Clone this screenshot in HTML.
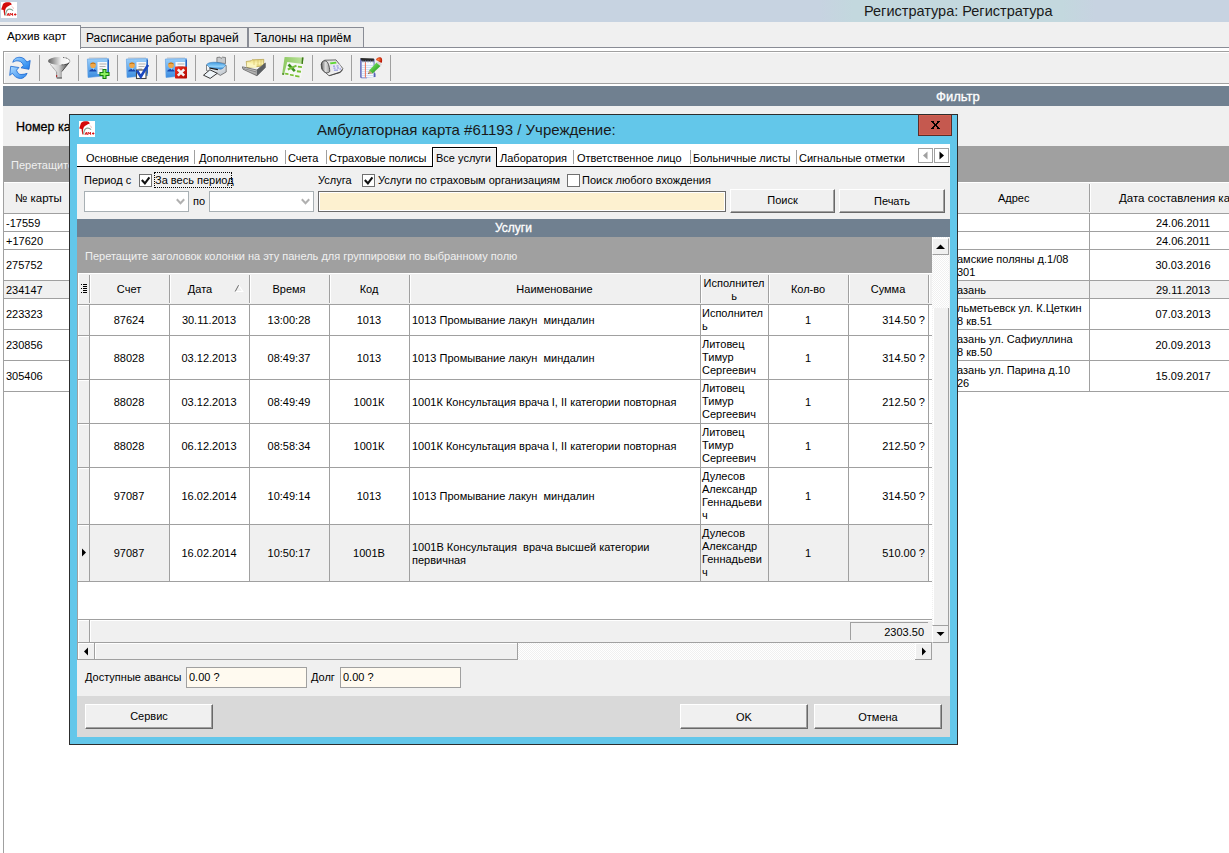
<!DOCTYPE html>
<html><head><meta charset="utf-8"><style>
*{box-sizing:border-box;margin:0;padding:0}
html,body{width:1229px;height:853px;overflow:hidden;background:#fff;font-family:"Liberation Sans",sans-serif;font-size:11px;color:#000}
div{position:absolute}
svg{display:block}
.t{white-space:pre;line-height:13px}
.cc{text-align:center}
.rr{text-align:right}
.bar{background:#708090;color:#fff;font-weight:bold;font-size:12px;text-align:center;line-height:19px}
.mtab{height:21px;border:1px solid #898c95;border-bottom:none;background:#ebebeb;font-size:12px;line-height:20px;padding-left:5px;white-space:pre}
.sep{top:55px;width:1px;height:26px;background:#a0a0a0}
.btn{background:#f0f0f0;border-top:1px solid #fff;border-left:1px solid #fff;border-right:1px solid #696969;border-bottom:1px solid #696969;box-shadow:inset -1px -1px 0 #a0a0a0;text-align:center;white-space:pre}
.vl{width:1px;background:#a0a0a0}
.hl{height:1px;background:#a0a0a0}
.cell{white-space:pre;line-height:13px;overflow:hidden}
</style></head><body>
<div style="left:0px;top:0px;width:1229px;height:22px;background:#c7d3e1"></div>
<div style="left:820px;top:0px;width:275px;height:22px;background:linear-gradient(90deg,rgba(196,216,222,0) 0%,#c3d8de 12%,#c3d8de 88%,rgba(196,216,222,0) 100%)"></div>
<div style="left:1px;top:2px;width:16px;height:16px;"><svg width="16" height="16" viewBox="0 0 16 16"><rect width="16" height="16" fill="#fff"/><path d="M0.2 7.5 L2 2 C3 0.5 6 0.2 8 0.3 C9.5 0.5 10.5 1.5 10.8 2.4 C8 3.5 6 4.5 5 6 C4 7.5 3.8 10 4 14 L3.2 12.7 C2.8 10.5 2.6 9 2.6 8.1 Z" fill="#d40a0a"/><path d="M4.6 13.5 C4.8 10 6 7.5 8 7.2 C10 7 11.5 8 12 8.8" stroke="#88a494" stroke-width="1.2" fill="none"/><path d="M10.5 4 C12 5 12.5 6.5 12.5 7" stroke="#f0b0b0" stroke-width="0.8" fill="none"/><path d="M6 13.8 L7.3 11.2 L8.4 13.8 M6.6 12.9 L8 12.9 M8.9 13.8 L9.2 11.2 L10.3 12.8 L11.4 11.2 L11.7 13.8 M13 12.5 L15.4 12.5 M14.2 11.3 L14.2 13.7" stroke="#d81818" stroke-width="1" fill="none"/></svg></div>
<div class="t" style="left:864px;top:2px;font-size:14.5px;line-height:18px;color:#1a1a1a">Регистратура: Регистратура</div>
<div style="left:0px;top:22px;width:1229px;height:26px;background:#f0f0f0"></div>
<div class="mtab" style="left:80px;top:27px;width:168px;">Расписание работы врачей</div>
<div class="mtab" style="left:248px;top:27px;width:116px;">Талоны на приём</div>
<div style="left:0px;top:47px;width:1229px;height:1px;background:#898c95"></div>
<div style="left:0px;top:25px;width:81px;height:24px;background:#fff;border-top:1px solid #898c95;border-right:1px solid #898c95"></div>
<div class="t" style="left:7px;top:28px;font-size:11.7px;line-height:16px">Архив карт</div>
<div style="left:3px;top:51px;width:1226px;height:33px;background:#f0f0f0;border:1px solid #a0a0a0;border-right:none;box-shadow:inset 1px 1px 0 #fff"></div>
<div style="left:39px;top:55px;width:1px;height:26px;background:#a0a0a0"></div>
<div style="left:78px;top:55px;width:1px;height:26px;background:#a0a0a0"></div>
<div style="left:117px;top:55px;width:1px;height:26px;background:#a0a0a0"></div>
<div style="left:156px;top:55px;width:1px;height:26px;background:#a0a0a0"></div>
<div style="left:195px;top:55px;width:1px;height:26px;background:#a0a0a0"></div>
<div style="left:234px;top:55px;width:1px;height:26px;background:#a0a0a0"></div>
<div style="left:273px;top:55px;width:1px;height:26px;background:#a0a0a0"></div>
<div style="left:312px;top:55px;width:1px;height:26px;background:#a0a0a0"></div>
<div style="left:351px;top:55px;width:1px;height:26px;background:#a0a0a0"></div>
<div style="left:390px;top:55px;width:1px;height:26px;background:#a0a0a0"></div>
<div style="left:8px;top:56px;width:24px;height:24px;"><svg width="24" height="24" viewBox="0 0 24 24"><defs><linearGradient id="rg" x1="0" y1="0" x2="1" y2="1"><stop offset="0" stop-color="#9dd2ff"/><stop offset="0.6" stop-color="#4aa0f6"/><stop offset="1" stop-color="#1e7ae8"/></linearGradient>
<linearGradient id="rg2" x1="1" y1="1" x2="0" y2="0"><stop offset="0" stop-color="#2a86ee"/><stop offset="1" stop-color="#b0dcff"/></linearGradient></defs>
<path d="M4.8 6.3 C6 2 9 1.3 11.8 1.3 C15 1.3 17.5 3.5 18.8 6 L22.2 4.5 L21 13.3 L13 11.8 L15.5 9.4 C14 6 12 4.8 9 4.8 C7.5 4.8 6 5.5 4.8 6.3 Z" fill="url(#rg)" stroke="#1866d0" stroke-width="0.8"/>
<path d="M19.1 17.3 C17.5 21 15 22.5 12.4 22.5 C9 22.5 6 20 4.5 17.3 L1.7 19.4 L2.7 10.3 L10.9 11.5 L8.5 14.2 C9.5 17 11 18.5 13 18.5 C15.5 18.5 17.5 18 19.1 17.3 Z" fill="url(#rg2)" stroke="#1866d0" stroke-width="0.8"/></svg></div>
<div style="left:47px;top:56px;width:24px;height:24px;"><svg width="24" height="24" viewBox="0 0 24 24"><defs><linearGradient id="fg1" x1="0" y1="0" x2="1" y2="0"><stop offset="0" stop-color="#5e5e5e"/><stop offset="0.6" stop-color="#f2f2f2"/><stop offset="1" stop-color="#ffffff"/></linearGradient>
<linearGradient id="fg2" x1="0" y1="0" x2="1" y2="0"><stop offset="0" stop-color="#f4f4f4"/><stop offset="0.45" stop-color="#d0d0d0"/><stop offset="1" stop-color="#4a4a4a"/></linearGradient></defs>
<path d="M3.5 8.5 L9.6 16 L9.6 22.3 L14.9 22.3 L14.9 15.5 L21.8 7 Z" fill="url(#fg2)"/>
<path d="M9.6 16 L9.6 22.3" stroke="#777" stroke-width="0.7"/>
<path d="M3.5 8.5 L9.6 16" stroke="#444" stroke-width="0.6" stroke-dasharray="1 0.6"/>
<path d="M21.8 7 L14.9 15.5" stroke="#333" stroke-width="0.8"/>
<ellipse cx="12" cy="5" rx="11" ry="3.9" fill="url(#fg1)"/>
<path d="M16 1.5 C21 1.8 23.5 4 22.6 6 C21.5 8 18 8.8 14 8.9" stroke="#333" stroke-width="0.7" fill="none" stroke-dasharray="1 0.5"/>
<rect x="10" y="21.5" width="4.9" height="1" fill="#444"/>
<rect x="9" y="19.2" width="1.2" height="1.6" fill="#b01818"/></svg></div>
<div style="left:86px;top:56px;width:24px;height:24px;"><svg width="24" height="24" viewBox="0 0 24 24"><defs><linearGradient id="cg" x1="0" y1="0" x2="0" y2="1"><stop offset="0" stop-color="#9cd0fa"/><stop offset="1" stop-color="#3a8ce0"/></linearGradient></defs>
<path d="M3 2 L21 2" stroke="#b8b8b8" stroke-width="0.8"/>
<path d="M1.4 3 L22.5 2.6 L22.5 19.5 L2 21.5 Z" fill="url(#cg)" stroke="#5a9ae0" stroke-width="0.6"/>
<path d="M21.5 3 L23 4 L23 17 L22 18Z" fill="#2a62c0"/>
<rect x="11.5" y="6" width="9.5" height="12" fill="#f8f8f8"/>
<path d="M13.5 8 H20.5 M13.5 10.5 H19.5 M13.5 13 H17" stroke="#a8a8a8" stroke-width="0.9"/>
<circle cx="7" cy="9.3" r="2.8" fill="#f0a848"/><path d="M4.2 8.8 C4.2 5.8 9.8 5.8 9.8 8.8 C9 7.5 5 7.5 4.2 8.8Z" fill="#c07010"/>
<path d="M3.2 15.5 C3.2 12 10.5 12 10.5 15.5 Z" fill="#1848b0"/><path d="M6.5 12.3 L7.5 14 L8.5 12.3Z" fill="#a8e0f8"/><path d="M17 13.5 H20 V16.5 H23 V19.5 H20 V22.5 H17 V19.5 H14 V16.5 H17 Z" fill="#8cf060" stroke="#118010" stroke-width="1.1"/></svg></div>
<div style="left:125px;top:56px;width:24px;height:24px;"><svg width="24" height="24" viewBox="0 0 24 24"><defs><linearGradient id="cg" x1="0" y1="0" x2="0" y2="1"><stop offset="0" stop-color="#9cd0fa"/><stop offset="1" stop-color="#3a8ce0"/></linearGradient></defs>
<path d="M3 2 L21 2" stroke="#b8b8b8" stroke-width="0.8"/>
<path d="M1.4 3 L22.5 2.6 L22.5 19.5 L2 21.5 Z" fill="url(#cg)" stroke="#5a9ae0" stroke-width="0.6"/>
<path d="M21.5 3 L23 4 L23 17 L22 18Z" fill="#2a62c0"/>
<rect x="11.5" y="6" width="9.5" height="12" fill="#f8f8f8"/>
<path d="M13.5 8 H20.5 M13.5 10.5 H19.5 M13.5 13 H17" stroke="#a8a8a8" stroke-width="0.9"/>
<circle cx="7" cy="9.3" r="2.8" fill="#f0a848"/><path d="M4.2 8.8 C4.2 5.8 9.8 5.8 9.8 8.8 C9 7.5 5 7.5 4.2 8.8Z" fill="#c07010"/>
<path d="M3.2 15.5 C3.2 12 10.5 12 10.5 15.5 Z" fill="#1848b0"/><path d="M6.5 12.3 L7.5 14 L8.5 12.3Z" fill="#a8e0f8"/><rect x="11.5" y="14" width="9.5" height="8.5" fill="#fff" stroke="#444" stroke-width="1.1"/><path d="M12 14.5 L15.8 20.8 L23 9" stroke="#1a48c0" stroke-width="2.6" fill="none"/></svg></div>
<div style="left:164px;top:56px;width:24px;height:24px;"><svg width="24" height="24" viewBox="0 0 24 24"><defs><linearGradient id="cg" x1="0" y1="0" x2="0" y2="1"><stop offset="0" stop-color="#9cd0fa"/><stop offset="1" stop-color="#3a8ce0"/></linearGradient></defs>
<path d="M3 2 L21 2" stroke="#b8b8b8" stroke-width="0.8"/>
<path d="M1.4 3 L22.5 2.6 L22.5 19.5 L2 21.5 Z" fill="url(#cg)" stroke="#5a9ae0" stroke-width="0.6"/>
<path d="M21.5 3 L23 4 L23 17 L22 18Z" fill="#2a62c0"/>
<rect x="11.5" y="6" width="9.5" height="12" fill="#f8f8f8"/>
<path d="M13.5 8 H20.5 M13.5 10.5 H19.5 M13.5 13 H17" stroke="#a8a8a8" stroke-width="0.9"/>
<circle cx="7" cy="9.3" r="2.8" fill="#f0a848"/><path d="M4.2 8.8 C4.2 5.8 9.8 5.8 9.8 8.8 C9 7.5 5 7.5 4.2 8.8Z" fill="#c07010"/>
<path d="M3.2 15.5 C3.2 12 10.5 12 10.5 15.5 Z" fill="#1848b0"/><path d="M6.5 12.3 L7.5 14 L8.5 12.3Z" fill="#a8e0f8"/><defs><linearGradient id="dg" x1="0" y1="0" x2="1" y2="1"><stop offset="0" stop-color="#f03020"/><stop offset="1" stop-color="#b00800"/></linearGradient></defs><rect x="11" y="10.5" width="12" height="12" rx="0.8" fill="url(#dg)"/><path d="M13.8 13.3 L20.2 19.7 M20.2 13.3 L13.8 19.7" stroke="#f4f4f4" stroke-width="2.6"/></svg></div>
<div style="left:203px;top:56px;width:24px;height:24px;"><svg width="24" height="24" viewBox="0 0 24 24"><defs><linearGradient id="pg" x1="0" y1="0" x2="0" y2="1"><stop offset="0" stop-color="#3f98e0"/><stop offset="0.6" stop-color="#8fd0f8"/><stop offset="1" stop-color="#2a80d0"/></linearGradient>
<linearGradient id="pw" x1="0" y1="0" x2="1" y2="1"><stop offset="0" stop-color="#ffffff"/><stop offset="1" stop-color="#b8c0c8"/></linearGradient></defs>
<path d="M13.9 6.6 L13.9 1.5 L17 1.1 L18 2.5 L19.5 1.1 L22.5 1.5 L22.5 7.5 Z" fill="#c8cacc" stroke="#606060" stroke-width="0.7"/>
<path d="M3.5 9 L3.5 14.5 L6.5 15.5 L14.9 17.9 L17.3 19.4 L23.2 16 L23.2 9.5 Z" fill="url(#pw)" stroke="#555" stroke-width="0.7"/>
<path d="M3.6 8.6 C5 6.5 9 6 13 6.3 C18 6.8 22 8 22.9 9.2 C21 11.5 19 13.3 17.5 13.3 L6.5 11.5 Z" fill="url(#pg)" stroke="#3070b0" stroke-width="0.5"/>
<path d="M6.3 12 L14.9 13.6" stroke="#111" stroke-width="1.2"/>
<path d="M0.5 19.2 L6.9 13.8 L14.3 17.3 L7.2 22.4 Z" fill="#eef4f8" stroke="#222" stroke-width="0.9"/></svg></div>
<div style="left:242px;top:56px;width:24px;height:24px;"><svg width="24" height="24" viewBox="0 0 24 24"><defs><linearGradient id="yg" x1="0" y1="0" x2="0" y2="1"><stop offset="0" stop-color="#e8d880"/><stop offset="0.5" stop-color="#fbf3b0"/><stop offset="1" stop-color="#e0cc60"/></linearGradient>
<linearGradient id="tg1" x1="0" y1="0" x2="0" y2="1"><stop offset="0" stop-color="#f4f4f4"/><stop offset="1" stop-color="#9a9a9a"/></linearGradient></defs>
<path d="M4.2 5.5 L9 4.8 L10 3.8 L21.8 3.4 L21.5 10 L5 11.5 Z" fill="url(#yg)" stroke="#a89030" stroke-width="0.6"/>
<path d="M5 7 L14.5 8.5 L14.5 12 L5 11 Z" fill="#fbf5c0"/>
<path d="M12 4 L12 9 M16 3.8 L16 9.5 M19 3.6 L19 9.8" stroke="#c8b050" stroke-width="0.5"/>
<path d="M0.3 10.8 L14.9 14 L23.3 7 L23.3 11.5 L15 19.8 L1 13.2 Z" fill="url(#tg1)" stroke="#505050" stroke-width="0.7"/>
<path d="M14.9 14 L23.3 7 L23.3 11.5 L15 19.8 Z" fill="#5a5e62"/>
<path d="M1.5 12.5 L14.5 16" stroke="#707070" stroke-width="0.7"/></svg></div>
<div style="left:281px;top:56px;width:24px;height:24px;"><svg width="24" height="24" viewBox="0 0 24 24"><defs><linearGradient id="xg" x1="0" y1="0" x2="1" y2="0"><stop offset="0" stop-color="#8cc860"/><stop offset="0.9" stop-color="#b8e098"/><stop offset="1" stop-color="#4a8a20"/></linearGradient></defs>
<path d="M3.6 1.1 L22.4 1.5 L21.8 8 L20 22 L2 18.8 Z" fill="#f6f8f4"/>
<path d="M3.6 1.1 L22.4 1.5 L21.8 8 L6.3 6 L3 18.8 L1.1 18.5 Z" fill="url(#xg)"/>
<path d="M21 1.5 L22.4 1.5 L21.8 8 L20.5 7.8 Z" fill="#3e7818"/>
<path d="M1.1 18.5 L3 18.8 L3.3 17.5 L1.4 17.2 Z" fill="#3e7818"/>
<path d="M7.5 8.5 L13.8 15.2" stroke="#3c9020" stroke-width="2.6"/>
<path d="M15.5 9.6 L6.8 13.5" stroke="#78c040" stroke-width="2"/>
<g fill="#78c030"><path d="M17 9.8 L21 10.2 L20.8 12 L16.8 11.6Z"/><path d="M16 14.3 L20 14.8 L19.8 16.8 L15.8 16.3Z"/><path d="M4.2 16.8 L7.5 17.3 L7.4 19 L4.1 18.5Z"/><path d="M9 17.9 L12.7 18.5 L12.6 20.2 L8.9 19.6Z"/><path d="M14.2 19.1 L18.5 19.8 L18.4 21.5 L14.1 20.8Z"/></g></svg></div>
<div style="left:320px;top:56px;width:24px;height:24px;"><svg width="24" height="24" viewBox="0 0 24 24"><defs><linearGradient id="tg" x1="0" y1="0" x2="1" y2="1"><stop offset="0" stop-color="#d8d8d8"/><stop offset="1" stop-color="#f8f8f8"/></linearGradient>
<linearGradient id="hg" x1="0" y1="0" x2="1" y2="0"><stop offset="0" stop-color="#707070"/><stop offset="0.5" stop-color="#e0e0e0"/><stop offset="1" stop-color="#9a9a9a"/></linearGradient></defs>
<path d="M1.1 8 L4.5 4.2 L16 3.9 L22.8 12.5 L20.3 16 L9 19.7 L1.7 13.3 Z" fill="url(#tg)" stroke="#4a4a4a" stroke-width="0.8"/>
<path d="M9.5 19.5 L20.5 15.8 L22.8 12.5 L22.5 14.5 L20 17 L9 20.2 Z" fill="#404040"/>
<path d="M1.5 7.5 C2 5 4 4.5 6 5 C8 6 9.5 10 9.8 15.5 C8 17.5 5 17 3.5 15 C2 13 1.5 10 1.5 7.5 Z" fill="url(#hg)" stroke="#3a3a3a" stroke-width="0.8"/>
<path d="M10 6.5 L16 5.8 L16.5 7.5 L10.5 8.2 Z" fill="#5cd830"/>
<path d="M11.5 9 L20 8.5 L21.5 13.5 L13 15.5 Z" fill="#e8e8f4"/>
<g fill="#9aa0e0"><rect x="13" y="9.5" width="2" height="1.3"/><rect x="16.5" y="9.3" width="2" height="1.3"/><rect x="13.5" y="11.5" width="2" height="1.3"/><rect x="17" y="11.3" width="2" height="1.3"/><rect x="14" y="13.5" width="4" height="1.3"/><rect x="19.5" y="12.3" width="1.5" height="1.3"/></g></svg></div>
<div style="left:359px;top:56px;width:24px;height:24px;"><svg width="24" height="24" viewBox="0 0 24 24"><defs><linearGradient id="ng" x1="0" y1="0" x2="1" y2="1"><stop offset="0" stop-color="#90ff70"/><stop offset="1" stop-color="#108010"/></linearGradient>
<radialGradient id="ner" cx="0.4" cy="0.4" r="0.6"><stop offset="0" stop-color="#ff8040"/><stop offset="1" stop-color="#b81000"/></radialGradient></defs>
<path d="M1.2 3 L15.5 3 L15.5 17 L16.5 17.5 L16.5 21 L8 21.5 L8 22.3 L2.5 22.3 L1.2 21.5 Z" fill="#5560b8"/>
<rect x="2.6" y="4.5" width="12" height="17" fill="#f4f8ff"/>
<path d="M3 9.5 H14.5 M3 11.5 H14.5 M3 13.5 H14.5 M3 15.5 H14.5 M3 17.5 H14.5 M3 19.5 H14.5" stroke="#b8d0f0" stroke-width="0.6"/>
<path d="M6.4 5 V21.5" stroke="#f07050" stroke-width="1"/>
<path d="M1.2 2 L14.9 2.5 L14.9 5.5 L3 5.5 Z" fill="#282828"/>
<path d="M4 4.5 V6.5 M6.5 4.5 V6.5 M9 4.5 V6.5 M11.5 4.5 V6.5 M14 4.5 V6.5" stroke="#8090c0" stroke-width="0.8"/>
<path d="M10 14.5 L17.5 6.5 L21.5 10 L13.5 17.5 Z" fill="url(#ng)"/>
<path d="M10 14.5 L13.5 17.5 L9 18 Z" fill="#c8a070"/>
<path d="M9 18 L10 16.8 L10.3 17.6Z" fill="#222"/>
<path d="M17.5 6.5 L19.5 5 L23 8.5 L21.5 10 Z" fill="#d8d8d8"/>
<path d="M17 4 C17.5 1.5 20 0.8 22 1.5 C23.5 2.5 23.5 5 22.5 7 L19 5 Z" fill="url(#ner)"/></svg></div>
<div style="left:3px;top:86px;width:1226px;height:20px;background:#708090"></div>
<div class="t" style="left:936px;top:89px;color:#fff;font-size:13px;line-height:15px;-webkit-text-stroke:0.3px #fff">Фильтр</div>
<div style="left:3px;top:106px;width:1226px;height:40px;background:#f0f0f0"></div>
<div class="t" style="left:16px;top:120px;font-size:12.5px;line-height:15px;-webkit-text-stroke:0.3px #000">Номер карты</div>
<div style="left:3px;top:146px;width:1226px;height:36px;background:#a0a0a0"></div>
<div class="t" style="left:11px;top:159px;color:#f0f0f0">Перетащите заголовок колонки</div>
<div style="left:3px;top:182px;width:1226px;height:32px;background:#f0f0f0;border-bottom:1px solid #a0a0a0"></div>
<div class="t" style="left:15px;top:192px;font-size:11.5px">№ карты</div>
<div class="t" style="left:998px;top:192px;">Адрес</div>
<div class="t" style="left:1119px;top:192px;font-size:11.5px">Дата составления карты</div>
<div style="left:3px;top:281px;width:1226px;height:17px;background:#f0f0f0"></div>
<div style="left:3px;top:231px;width:1226px;height:1px;background:#a0a0a0"></div>
<div class="t" style="left:6px;top:217px;">-17559</div>
<div class="t" style="left:1090px;top:217px;width:186px;text-align:center">24.06.2011</div>
<div style="left:3px;top:249px;width:1226px;height:1px;background:#a0a0a0"></div>
<div class="t" style="left:6px;top:235px;">+17620</div>
<div class="t" style="left:1090px;top:235px;width:186px;text-align:center">24.06.2011</div>
<div style="left:3px;top:280px;width:1226px;height:1px;background:#a0a0a0"></div>
<div class="t" style="left:6px;top:259px;">275752</div>
<div class="t" style="left:1090px;top:259px;width:186px;text-align:center">30.03.2016</div>
<div class="t" style="left:957px;top:253px;">амские поляны д.1/08
301</div>
<div style="left:3px;top:298px;width:1226px;height:1px;background:#a0a0a0"></div>
<div class="t" style="left:6px;top:284px;">234147</div>
<div class="t" style="left:1090px;top:284px;width:186px;text-align:center">29.11.2013</div>
<div class="t" style="left:957px;top:284px;">азань</div>
<div style="left:3px;top:329px;width:1226px;height:1px;background:#a0a0a0"></div>
<div class="t" style="left:6px;top:308px;">223323</div>
<div class="t" style="left:1090px;top:308px;width:186px;text-align:center">07.03.2013</div>
<div class="t" style="left:957px;top:302px;">льметьевск ул. К.Цеткин
8 кв.51</div>
<div style="left:3px;top:360px;width:1226px;height:1px;background:#a0a0a0"></div>
<div class="t" style="left:6px;top:339px;">230856</div>
<div class="t" style="left:1090px;top:339px;width:186px;text-align:center">20.09.2013</div>
<div class="t" style="left:957px;top:333px;">азань ул. Сафиуллина
8 кв.50</div>
<div style="left:3px;top:391px;width:1226px;height:1px;background:#a0a0a0"></div>
<div class="t" style="left:6px;top:370px;">305406</div>
<div class="t" style="left:1090px;top:370px;width:186px;text-align:center">15.09.2017</div>
<div class="t" style="left:957px;top:364px;">азань ул. Парина д.10
26</div>
<div style="left:3px;top:182px;width:1226px;height:1px;background:#fff"></div>
<div style="left:1089px;top:184px;width:1px;height:28px;background:#a0a0a0"></div>
<div style="left:1090px;top:184px;width:1px;height:28px;background:#fff"></div>
<div style="left:1089px;top:214px;width:1px;height:178px;background:#a0a0a0"></div>
<div style="left:3px;top:182px;width:1px;height:671px;background:#a0a0a0"></div>
<div style="left:69px;top:114px;width:889px;height:631px;background:#63c7ea;border:1px solid #2d2d2d"></div>
<div style="left:79px;top:121px;width:16px;height:16px;"><svg width="16" height="16" viewBox="0 0 16 16"><rect width="16" height="16" fill="#fff"/><path d="M0.2 7.5 L2 2 C3 0.5 6 0.2 8 0.3 C9.5 0.5 10.5 1.5 10.8 2.4 C8 3.5 6 4.5 5 6 C4 7.5 3.8 10 4 14 L3.2 12.7 C2.8 10.5 2.6 9 2.6 8.1 Z" fill="#d40a0a"/><path d="M4.6 13.5 C4.8 10 6 7.5 8 7.2 C10 7 11.5 8 12 8.8" stroke="#88a494" stroke-width="1.2" fill="none"/><path d="M10.5 4 C12 5 12.5 6.5 12.5 7" stroke="#f0b0b0" stroke-width="0.8" fill="none"/><path d="M6 13.8 L7.3 11.2 L8.4 13.8 M6.6 12.9 L8 12.9 M8.9 13.8 L9.2 11.2 L10.3 12.8 L11.4 11.2 L11.7 13.8 M13 12.5 L15.4 12.5 M14.2 11.3 L14.2 13.7" stroke="#d81818" stroke-width="1" fill="none"/></svg></div>
<div class="t" style="left:317px;top:121px;font-size:15px;line-height:18px;color:#1a1a1a">Амбулаторная карта #61193 / Учреждение:</div>
<div style="left:918px;top:114px;width:34px;height:22px;background:#c5594f;border:1px solid #5a2d2a;border-top-color:#2d2d2d;box-shadow:inset 0 0 0 1px #d3604f"></div>
<div style="left:931px;top:121px;width:9px;height:8px"><svg width="9" height="8" shape-rendering="crispEdges"><g fill="#000"><rect x="0" y="0" width="1" height="1"/><rect x="1" y="0" width="1" height="1"/><rect x="2" y="0" width="1" height="1"/><rect x="6" y="0" width="1" height="1"/><rect x="7" y="0" width="1" height="1"/><rect x="8" y="0" width="1" height="1"/><rect x="1" y="1" width="1" height="1"/><rect x="2" y="1" width="1" height="1"/><rect x="6" y="1" width="1" height="1"/><rect x="7" y="1" width="1" height="1"/><rect x="2" y="2" width="1" height="1"/><rect x="3" y="2" width="1" height="1"/><rect x="5" y="2" width="1" height="1"/><rect x="6" y="2" width="1" height="1"/><rect x="3" y="3" width="1" height="1"/><rect x="4" y="3" width="1" height="1"/><rect x="5" y="3" width="1" height="1"/><rect x="3" y="4" width="1" height="1"/><rect x="4" y="4" width="1" height="1"/><rect x="5" y="4" width="1" height="1"/><rect x="2" y="5" width="1" height="1"/><rect x="3" y="5" width="1" height="1"/><rect x="5" y="5" width="1" height="1"/><rect x="6" y="5" width="1" height="1"/><rect x="1" y="6" width="1" height="1"/><rect x="2" y="6" width="1" height="1"/><rect x="6" y="6" width="1" height="1"/><rect x="7" y="6" width="1" height="1"/><rect x="0" y="7" width="1" height="1"/><rect x="1" y="7" width="1" height="1"/><rect x="2" y="7" width="1" height="1"/><rect x="6" y="7" width="1" height="1"/><rect x="7" y="7" width="1" height="1"/><rect x="8" y="7" width="1" height="1"/></g></svg></div>
<div style="left:77px;top:144px;width:873px;height:593px;background:#f0f0f0"></div>
<div style="left:77px;top:144px;width:873px;height:22px;background:#fff"></div>
<div style="left:77px;top:166px;width:873px;height:1px;background:#000"></div>
<div class="t" style="left:86px;top:152px;">Основные сведения</div>
<div class="t" style="left:199px;top:152px;">Дополнительно</div>
<div class="t" style="left:288px;top:152px;">Счета</div>
<div class="t" style="left:329px;top:152px;">Страховые полисы</div>
<div class="t" style="left:500px;top:152px;">Лаборатория</div>
<div class="t" style="left:577px;top:152px;">Ответственное лицо</div>
<div class="t" style="left:693px;top:152px;">Больничные листы</div>
<div class="t" style="left:799px;top:152px;">Сигнальные отметки</div>
<div style="left:194px;top:150px;width:1px;height:14px;background:#a0a0a0"></div>
<div style="left:285px;top:150px;width:1px;height:14px;background:#a0a0a0"></div>
<div style="left:326px;top:150px;width:1px;height:14px;background:#a0a0a0"></div>
<div style="left:573px;top:150px;width:1px;height:14px;background:#a0a0a0"></div>
<div style="left:690px;top:150px;width:1px;height:14px;background:#a0a0a0"></div>
<div style="left:796px;top:150px;width:1px;height:14px;background:#a0a0a0"></div>
<div style="left:432px;top:147px;width:65px;height:20px;background:#f0f0f0;border:1px solid #000;border-bottom:none;box-shadow:inset 1px 1px 0 #fff"></div>
<div class="t" style="left:436px;top:152px;">Все услуги</div>
<div style="left:918px;top:148px;width:15px;height:15px;background:#fff;border:1px solid #a0a0a0"></div>
<div style="left:918px;top:148px;width:15px;height:15px"><svg width="15" height="15"><path d="M5 7.5 L9.5 3.5 L9.5 11.5Z" fill="#a0a0a0"/></svg></div>
<div style="left:934px;top:148px;width:15px;height:15px;background:#fff;border:1px solid #a0a0a0"></div>
<div style="left:934px;top:148px;width:15px;height:15px"><svg width="15" height="15"><path d="M10 7.5 L5.5 3.5 L5.5 11.5Z" fill="#000"/></svg></div>
<div class="t" style="left:84px;top:174px;">Период с</div>
<div style="left:139px;top:174px;width:13px;height:13px;"><svg width="13" height="13"><rect x="0.5" y="0.5" width="12" height="12" fill="#fff" stroke="#707070"/><path d="M2.8 6 L5.9 9.3 L10.4 3.4" stroke="#111" stroke-width="2.1" fill="none"/></svg></div>
<div style="left:154px;top:172px;width:78px;height:16px;border:1px dotted #000"></div>
<div class="t" style="left:155px;top:174px;">За весь период</div>
<div style="left:84px;top:191px;width:105px;height:21px;background:#fff;border:1px solid #a8b0b4"></div>
<div style="left:175px;top:197px;width:12px;height:10px"><svg width="12" height="10"><path d="M1.8 2.3 L5.5 6.3 L9.2 2.3" stroke="#b0b0b0" stroke-width="2" fill="none"/></svg></div>
<div class="t" style="left:193px;top:195px;">по</div>
<div style="left:209px;top:191px;width:105px;height:21px;background:#fff;border:1px solid #a8b0b4"></div>
<div style="left:300px;top:197px;width:12px;height:10px"><svg width="12" height="10"><path d="M1.8 2.3 L5.5 6.3 L9.2 2.3" stroke="#b0b0b0" stroke-width="2" fill="none"/></svg></div>
<div class="t" style="left:318px;top:174px;">Услуга</div>
<div style="left:362px;top:174px;width:13px;height:13px;"><svg width="13" height="13"><rect x="0.5" y="0.5" width="12" height="12" fill="#fff" stroke="#707070"/><path d="M2.8 6 L5.9 9.3 L10.4 3.4" stroke="#111" stroke-width="2.1" fill="none"/></svg></div>
<div class="t" style="left:378px;top:174px;">Услуги по страховым организациям</div>
<div style="left:567px;top:174px;width:13px;height:13px;"><svg width="13" height="13"><rect x="0.5" y="0.5" width="12" height="12" fill="#fff" stroke="#707070"/></svg></div>
<div class="t" style="left:582px;top:174px;">Поиск любого вхождения</div>
<div style="left:318px;top:191px;width:408px;height:21px;background:#fdf1d0;border:1px solid #6a6a6a;box-shadow:inset 0 0 0 1px #fff"></div>
<div class="btn t" style="left:730px;top:189px;width:105px;height:24px;line-height:21px">Поиск</div>
<div class="btn t" style="left:839px;top:189px;width:106px;height:24px;line-height:23px">Печать</div>
<div class="bar" style="left:77px;top:219px;width:873px;height:18px;line-height:18px;font-size:12px;font-weight:normal;-webkit-text-stroke:0.3px #fff">Услуги</div>
<div style="left:77px;top:237px;width:855px;height:36px;background:#a0a0a0"></div>
<div class="t" style="left:85px;top:250px;color:#f0f0f0">Перетащите заголовок колонки на эту панель для группировки по выбранному полю</div>
<div style="left:932px;top:237px;width:17px;height:405px;background:repeating-conic-gradient(#f0f0f0 0% 25%,#fff 0% 50%) 0 0/2px 2px"></div>
<div style="left:949px;top:237px;width:1px;height:405px;background:#f0f0f0"></div>
<div style="left:932px;top:238px;width:17px;height:17px;background:#f0f0f0;border-right:1px solid #a0a0a0;border-bottom:1px solid #a0a0a0;border-top:1px solid #fff;border-left:1px solid #fff"></div>
<div style="left:932px;top:238px;width:17px;height:17px"><svg width="17" height="17"><path d="M4 11 L8.5 6.5 L13 11Z" fill="#000"/></svg></div>
<div style="left:933px;top:308px;width:16px;height:317px;background:#f0f0f0;border-right:1px solid #a0a0a0;border-left:1px solid #fff"></div>
<div style="left:932px;top:625px;width:17px;height:18px;background:#f0f0f0;border-right:1px solid #a0a0a0;border-bottom:1px solid #a0a0a0;border-top:1px solid #a0a0a0;border-left:1px solid #fff"></div>
<div style="left:932px;top:625px;width:17px;height:17px"><svg width="17" height="17"><path d="M4.5 7 L8.5 11 L12.5 7Z" fill="#000"/></svg></div>
<div style="left:77px;top:273px;width:855px;height:369px;background:#fff"></div>
<div style="left:77px;top:273px;width:1px;height:369px;background:#a0a0a0"></div>
<div style="left:78px;top:273px;width:854px;height:31px;background:#f0f0f0"></div>
<div style="left:77px;top:304px;width:855px;height:1px;background:#a0a0a0"></div>
<div style="left:78px;top:273px;width:854px;height:1px;background:#fff"></div>
<div style="left:78px;top:273px;width:1px;height:31px;background:#fff"></div>
<div style="left:89px;top:275px;width:1px;height:28px;background:#a0a0a0"></div>
<div style="left:90px;top:275px;width:1px;height:28px;background:#fff"></div>
<div style="left:169px;top:275px;width:1px;height:28px;background:#a0a0a0"></div>
<div style="left:170px;top:275px;width:1px;height:28px;background:#fff"></div>
<div style="left:249px;top:275px;width:1px;height:28px;background:#a0a0a0"></div>
<div style="left:250px;top:275px;width:1px;height:28px;background:#fff"></div>
<div style="left:329px;top:275px;width:1px;height:28px;background:#a0a0a0"></div>
<div style="left:330px;top:275px;width:1px;height:28px;background:#fff"></div>
<div style="left:409px;top:275px;width:1px;height:28px;background:#a0a0a0"></div>
<div style="left:410px;top:275px;width:1px;height:28px;background:#fff"></div>
<div style="left:700px;top:275px;width:1px;height:28px;background:#a0a0a0"></div>
<div style="left:701px;top:275px;width:1px;height:28px;background:#fff"></div>
<div style="left:768px;top:275px;width:1px;height:28px;background:#a0a0a0"></div>
<div style="left:769px;top:275px;width:1px;height:28px;background:#fff"></div>
<div style="left:848px;top:275px;width:1px;height:28px;background:#a0a0a0"></div>
<div style="left:849px;top:275px;width:1px;height:28px;background:#fff"></div>
<div style="left:928px;top:275px;width:1px;height:28px;background:#a0a0a0"></div>
<div style="left:929px;top:275px;width:1px;height:28px;background:#fff"></div>
<div class="t" style="left:89px;top:283px;width:80px;text-align:center">Счет</div>
<div class="t" style="left:160px;top:283px;width:80px;text-align:center">Дата</div>
<div class="t" style="left:249px;top:283px;width:80px;text-align:center">Время</div>
<div class="t" style="left:329px;top:283px;width:80px;text-align:center">Код</div>
<div class="t" style="left:409px;top:283px;width:291px;text-align:center">Наименование</div>
<div class="t" style="left:768px;top:283px;width:80px;text-align:center">Кол-во</div>
<div class="t" style="left:848px;top:283px;width:80px;text-align:center">Сумма</div>
<div class="t" style="left:700px;top:277px;width:68px;text-align:center">Исполнител
ь</div>
<div style="left:234px;top:284px;width:10px;height:9px"><svg width="10" height="9"><path d="M4.6 1.2 L8.8 7.5 L1.2 7.5" stroke="#fff" stroke-width="1.1" fill="none"/><path d="M1.2 7.5 L4.6 1.2" stroke="#6a6a6a" stroke-width="1"/></svg></div>
<div style="left:81px;top:284px;width:6px;height:9px"><svg width="6" height="9" shape-rendering="crispEdges"><g fill="#000"><rect x="0" y="0" width="1" height="1"/><rect x="2" y="0" width="4" height="1"/><rect x="2" y="2" width="4" height="1"/><rect x="0" y="4" width="1" height="1"/><rect x="2" y="4" width="4" height="1"/><rect x="2" y="6" width="4" height="1"/><rect x="0" y="8" width="1" height="1"/><rect x="2" y="8" width="4" height="1"/></g></svg></div>
<div style="left:78px;top:305px;width:11px;height:30px;background:#f0f0f0;box-shadow:inset 1px 1px 0 #fff"></div>
<div style="left:77px;top:335px;width:855px;height:1px;background:#a0a0a0"></div>
<div style="left:89px;top:305px;width:1px;height:30px;background:#a0a0a0"></div>
<div style="left:169px;top:305px;width:1px;height:30px;background:#a0a0a0"></div>
<div style="left:249px;top:305px;width:1px;height:30px;background:#a0a0a0"></div>
<div style="left:329px;top:305px;width:1px;height:30px;background:#a0a0a0"></div>
<div style="left:409px;top:305px;width:1px;height:30px;background:#a0a0a0"></div>
<div style="left:700px;top:305px;width:1px;height:30px;background:#a0a0a0"></div>
<div style="left:768px;top:305px;width:1px;height:30px;background:#a0a0a0"></div>
<div style="left:848px;top:305px;width:1px;height:30px;background:#a0a0a0"></div>
<div style="left:928px;top:305px;width:1px;height:30px;background:#a0a0a0"></div>
<div class="t" style="left:89px;top:314px;width:80px;text-align:center">87624</div>
<div class="t" style="left:169px;top:314px;width:80px;text-align:center">30.11.2013</div>
<div class="t" style="left:249px;top:314px;width:80px;text-align:center">13:00:28</div>
<div class="t" style="left:329px;top:314px;width:80px;text-align:center">1013</div>
<div class="t" style="left:412px;top:314px;">1013 Промывание лакун  миндалин</div>
<div class="t" style="left:702px;top:307px;">Исполнител
ь</div>
<div class="t" style="left:768px;top:314px;width:80px;text-align:center">1</div>
<div class="t" style="left:848px;top:314px;width:77px;text-align:right">314.50 ?</div>
<div style="left:78px;top:336px;width:11px;height:43px;background:#f0f0f0;box-shadow:inset 1px 1px 0 #fff"></div>
<div style="left:77px;top:379px;width:855px;height:1px;background:#a0a0a0"></div>
<div style="left:89px;top:336px;width:1px;height:43px;background:#a0a0a0"></div>
<div style="left:169px;top:336px;width:1px;height:43px;background:#a0a0a0"></div>
<div style="left:249px;top:336px;width:1px;height:43px;background:#a0a0a0"></div>
<div style="left:329px;top:336px;width:1px;height:43px;background:#a0a0a0"></div>
<div style="left:409px;top:336px;width:1px;height:43px;background:#a0a0a0"></div>
<div style="left:700px;top:336px;width:1px;height:43px;background:#a0a0a0"></div>
<div style="left:768px;top:336px;width:1px;height:43px;background:#a0a0a0"></div>
<div style="left:848px;top:336px;width:1px;height:43px;background:#a0a0a0"></div>
<div style="left:928px;top:336px;width:1px;height:43px;background:#a0a0a0"></div>
<div class="t" style="left:89px;top:352px;width:80px;text-align:center">88028</div>
<div class="t" style="left:169px;top:352px;width:80px;text-align:center">03.12.2013</div>
<div class="t" style="left:249px;top:352px;width:80px;text-align:center">08:49:37</div>
<div class="t" style="left:329px;top:352px;width:80px;text-align:center">1013</div>
<div class="t" style="left:412px;top:352px;">1013 Промывание лакун  миндалин</div>
<div class="t" style="left:702px;top:338px;">Литовец
Тимур
Сергеевич</div>
<div class="t" style="left:768px;top:352px;width:80px;text-align:center">1</div>
<div class="t" style="left:848px;top:352px;width:77px;text-align:right">314.50 ?</div>
<div style="left:78px;top:380px;width:11px;height:43px;background:#f0f0f0;box-shadow:inset 1px 1px 0 #fff"></div>
<div style="left:77px;top:423px;width:855px;height:1px;background:#a0a0a0"></div>
<div style="left:89px;top:380px;width:1px;height:43px;background:#a0a0a0"></div>
<div style="left:169px;top:380px;width:1px;height:43px;background:#a0a0a0"></div>
<div style="left:249px;top:380px;width:1px;height:43px;background:#a0a0a0"></div>
<div style="left:329px;top:380px;width:1px;height:43px;background:#a0a0a0"></div>
<div style="left:409px;top:380px;width:1px;height:43px;background:#a0a0a0"></div>
<div style="left:700px;top:380px;width:1px;height:43px;background:#a0a0a0"></div>
<div style="left:768px;top:380px;width:1px;height:43px;background:#a0a0a0"></div>
<div style="left:848px;top:380px;width:1px;height:43px;background:#a0a0a0"></div>
<div style="left:928px;top:380px;width:1px;height:43px;background:#a0a0a0"></div>
<div class="t" style="left:89px;top:396px;width:80px;text-align:center">88028</div>
<div class="t" style="left:169px;top:396px;width:80px;text-align:center">03.12.2013</div>
<div class="t" style="left:249px;top:396px;width:80px;text-align:center">08:49:49</div>
<div class="t" style="left:329px;top:396px;width:80px;text-align:center">1001К</div>
<div class="t" style="left:412px;top:396px;">1001К Консультация врача I, II категории повторная</div>
<div class="t" style="left:702px;top:382px;">Литовец
Тимур
Сергеевич</div>
<div class="t" style="left:768px;top:396px;width:80px;text-align:center">1</div>
<div class="t" style="left:848px;top:396px;width:77px;text-align:right">212.50 ?</div>
<div style="left:78px;top:424px;width:11px;height:43px;background:#f0f0f0;box-shadow:inset 1px 1px 0 #fff"></div>
<div style="left:77px;top:467px;width:855px;height:1px;background:#a0a0a0"></div>
<div style="left:89px;top:424px;width:1px;height:43px;background:#a0a0a0"></div>
<div style="left:169px;top:424px;width:1px;height:43px;background:#a0a0a0"></div>
<div style="left:249px;top:424px;width:1px;height:43px;background:#a0a0a0"></div>
<div style="left:329px;top:424px;width:1px;height:43px;background:#a0a0a0"></div>
<div style="left:409px;top:424px;width:1px;height:43px;background:#a0a0a0"></div>
<div style="left:700px;top:424px;width:1px;height:43px;background:#a0a0a0"></div>
<div style="left:768px;top:424px;width:1px;height:43px;background:#a0a0a0"></div>
<div style="left:848px;top:424px;width:1px;height:43px;background:#a0a0a0"></div>
<div style="left:928px;top:424px;width:1px;height:43px;background:#a0a0a0"></div>
<div class="t" style="left:89px;top:440px;width:80px;text-align:center">88028</div>
<div class="t" style="left:169px;top:440px;width:80px;text-align:center">06.12.2013</div>
<div class="t" style="left:249px;top:440px;width:80px;text-align:center">08:58:34</div>
<div class="t" style="left:329px;top:440px;width:80px;text-align:center">1001К</div>
<div class="t" style="left:412px;top:440px;">1001К Консультация врача I, II категории повторная</div>
<div class="t" style="left:702px;top:426px;">Литовец
Тимур
Сергеевич</div>
<div class="t" style="left:768px;top:440px;width:80px;text-align:center">1</div>
<div class="t" style="left:848px;top:440px;width:77px;text-align:right">212.50 ?</div>
<div style="left:78px;top:468px;width:11px;height:56px;background:#f0f0f0;box-shadow:inset 1px 1px 0 #fff"></div>
<div style="left:77px;top:524px;width:855px;height:1px;background:#a0a0a0"></div>
<div style="left:89px;top:468px;width:1px;height:56px;background:#a0a0a0"></div>
<div style="left:169px;top:468px;width:1px;height:56px;background:#a0a0a0"></div>
<div style="left:249px;top:468px;width:1px;height:56px;background:#a0a0a0"></div>
<div style="left:329px;top:468px;width:1px;height:56px;background:#a0a0a0"></div>
<div style="left:409px;top:468px;width:1px;height:56px;background:#a0a0a0"></div>
<div style="left:700px;top:468px;width:1px;height:56px;background:#a0a0a0"></div>
<div style="left:768px;top:468px;width:1px;height:56px;background:#a0a0a0"></div>
<div style="left:848px;top:468px;width:1px;height:56px;background:#a0a0a0"></div>
<div style="left:928px;top:468px;width:1px;height:56px;background:#a0a0a0"></div>
<div class="t" style="left:89px;top:490px;width:80px;text-align:center">97087</div>
<div class="t" style="left:169px;top:490px;width:80px;text-align:center">16.02.2014</div>
<div class="t" style="left:249px;top:490px;width:80px;text-align:center">10:49:14</div>
<div class="t" style="left:329px;top:490px;width:80px;text-align:center">1013</div>
<div class="t" style="left:412px;top:490px;">1013 Промывание лакун  миндалин</div>
<div class="t" style="left:702px;top:470px;">Дулесов
Александр
Геннадьеви
ч</div>
<div class="t" style="left:768px;top:490px;width:80px;text-align:center">1</div>
<div class="t" style="left:848px;top:490px;width:77px;text-align:right">314.50 ?</div>
<div style="left:78px;top:525px;width:11px;height:56px;background:#f0f0f0;box-shadow:inset 1px 1px 0 #fff"></div>
<div style="left:89px;top:525px;width:80px;height:56px;background:#f0f0f0"></div>
<div style="left:249px;top:525px;width:679px;height:56px;background:#f0f0f0"></div>
<div style="left:81px;top:548px;width:6px;height:9px"><svg width="6" height="9"><path d="M1 0.5 L5 4.5 L1 8.5Z" fill="#000"/></svg></div>
<div style="left:77px;top:581px;width:855px;height:1px;background:#a0a0a0"></div>
<div style="left:89px;top:525px;width:1px;height:56px;background:#a0a0a0"></div>
<div style="left:169px;top:525px;width:1px;height:56px;background:#a0a0a0"></div>
<div style="left:249px;top:525px;width:1px;height:56px;background:#a0a0a0"></div>
<div style="left:329px;top:525px;width:1px;height:56px;background:#a0a0a0"></div>
<div style="left:409px;top:525px;width:1px;height:56px;background:#a0a0a0"></div>
<div style="left:700px;top:525px;width:1px;height:56px;background:#a0a0a0"></div>
<div style="left:768px;top:525px;width:1px;height:56px;background:#a0a0a0"></div>
<div style="left:848px;top:525px;width:1px;height:56px;background:#a0a0a0"></div>
<div style="left:928px;top:525px;width:1px;height:56px;background:#a0a0a0"></div>
<div class="t" style="left:89px;top:547px;width:80px;text-align:center">97087</div>
<div class="t" style="left:169px;top:547px;width:80px;text-align:center">16.02.2014</div>
<div class="t" style="left:249px;top:547px;width:80px;text-align:center">10:50:17</div>
<div class="t" style="left:329px;top:547px;width:80px;text-align:center">1001В</div>
<div class="t" style="left:412px;top:541px;">1001В Консультация  врача высшей категории
первичная</div>
<div class="t" style="left:702px;top:527px;">Дулесов
Александр
Геннадьеви
ч</div>
<div class="t" style="left:768px;top:547px;width:80px;text-align:center">1</div>
<div class="t" style="left:848px;top:547px;width:77px;text-align:right">510.00 ?</div>
<div style="left:78px;top:620px;width:854px;height:22px;background:#f0f0f0;box-shadow:inset 1px 1px 0 #fff"></div>
<div style="left:90px;top:620px;width:1px;height:22px;background:#fff"></div>
<div style="left:77px;top:619px;width:855px;height:1px;background:#a0a0a0"></div>
<div style="left:89px;top:620px;width:1px;height:22px;background:#a0a0a0"></div>
<div style="left:77px;top:642px;width:855px;height:1px;background:#a0a0a0"></div>
<div style="left:850px;top:622px;width:78px;height:18px;border-left:1px solid #a0a0a0;border-top:1px solid #a0a0a0"></div>
<div class="t" style="left:850px;top:626px;width:74px;text-align:right">2303.50</div>
<div style="left:77px;top:643px;width:855px;height:17px;background:repeating-conic-gradient(#f0f0f0 0% 25%,#fff 0% 50%) 0 0/2px 2px;border-left:1px solid #a0a0a0"></div>
<div style="left:78px;top:643px;width:17px;height:17px;background:#f0f0f0;border-right:1px solid #a0a0a0;border-bottom:1px solid #a0a0a0;box-shadow:inset 1px 1px 0 #fff"></div>
<div style="left:78px;top:643px;width:17px;height:17px"><svg width="17" height="17"><path d="M10 4.5 L6 8.5 L10 12.5Z" fill="#000"/></svg></div>
<div style="left:95px;top:643px;width:423px;height:17px;background:#f0f0f0;border-right:1px solid #a0a0a0;border-bottom:1px solid #a0a0a0;box-shadow:inset 1px 1px 0 #fff"></div>
<div style="left:915px;top:643px;width:17px;height:17px;background:#f0f0f0;border-right:1px solid #a0a0a0;border-bottom:1px solid #a0a0a0;box-shadow:inset 1px 1px 0 #fff"></div>
<div style="left:915px;top:643px;width:17px;height:17px"><svg width="17" height="17"><path d="M7 4.5 L11 8.5 L7 12.5Z" fill="#000"/></svg></div>
<div class="t" style="left:85px;top:671px;">Доступные авансы</div>
<div style="left:186px;top:667px;width:121px;height:21px;background:#fffaf0;border:1px solid #a0a0a0"></div>
<div class="t" style="left:189px;top:671px;">0.00 ?</div>
<div class="t" style="left:311px;top:671px;">Долг</div>
<div style="left:340px;top:667px;width:121px;height:21px;background:#fffaf0;border:1px solid #a0a0a0"></div>
<div class="t" style="left:343px;top:671px;">0.00 ?</div>
<div style="left:77px;top:696px;width:873px;height:41px;background:#d9d9d9"></div>
<div class="btn t" style="left:85px;top:704px;width:128px;height:25px;line-height:22px">Сервис</div>
<div class="btn t" style="left:680px;top:704px;width:128px;height:25px;line-height:24px">OK</div>
<div class="btn t" style="left:814px;top:704px;width:128px;height:25px;line-height:24px">Отмена</div>
</body></html>
